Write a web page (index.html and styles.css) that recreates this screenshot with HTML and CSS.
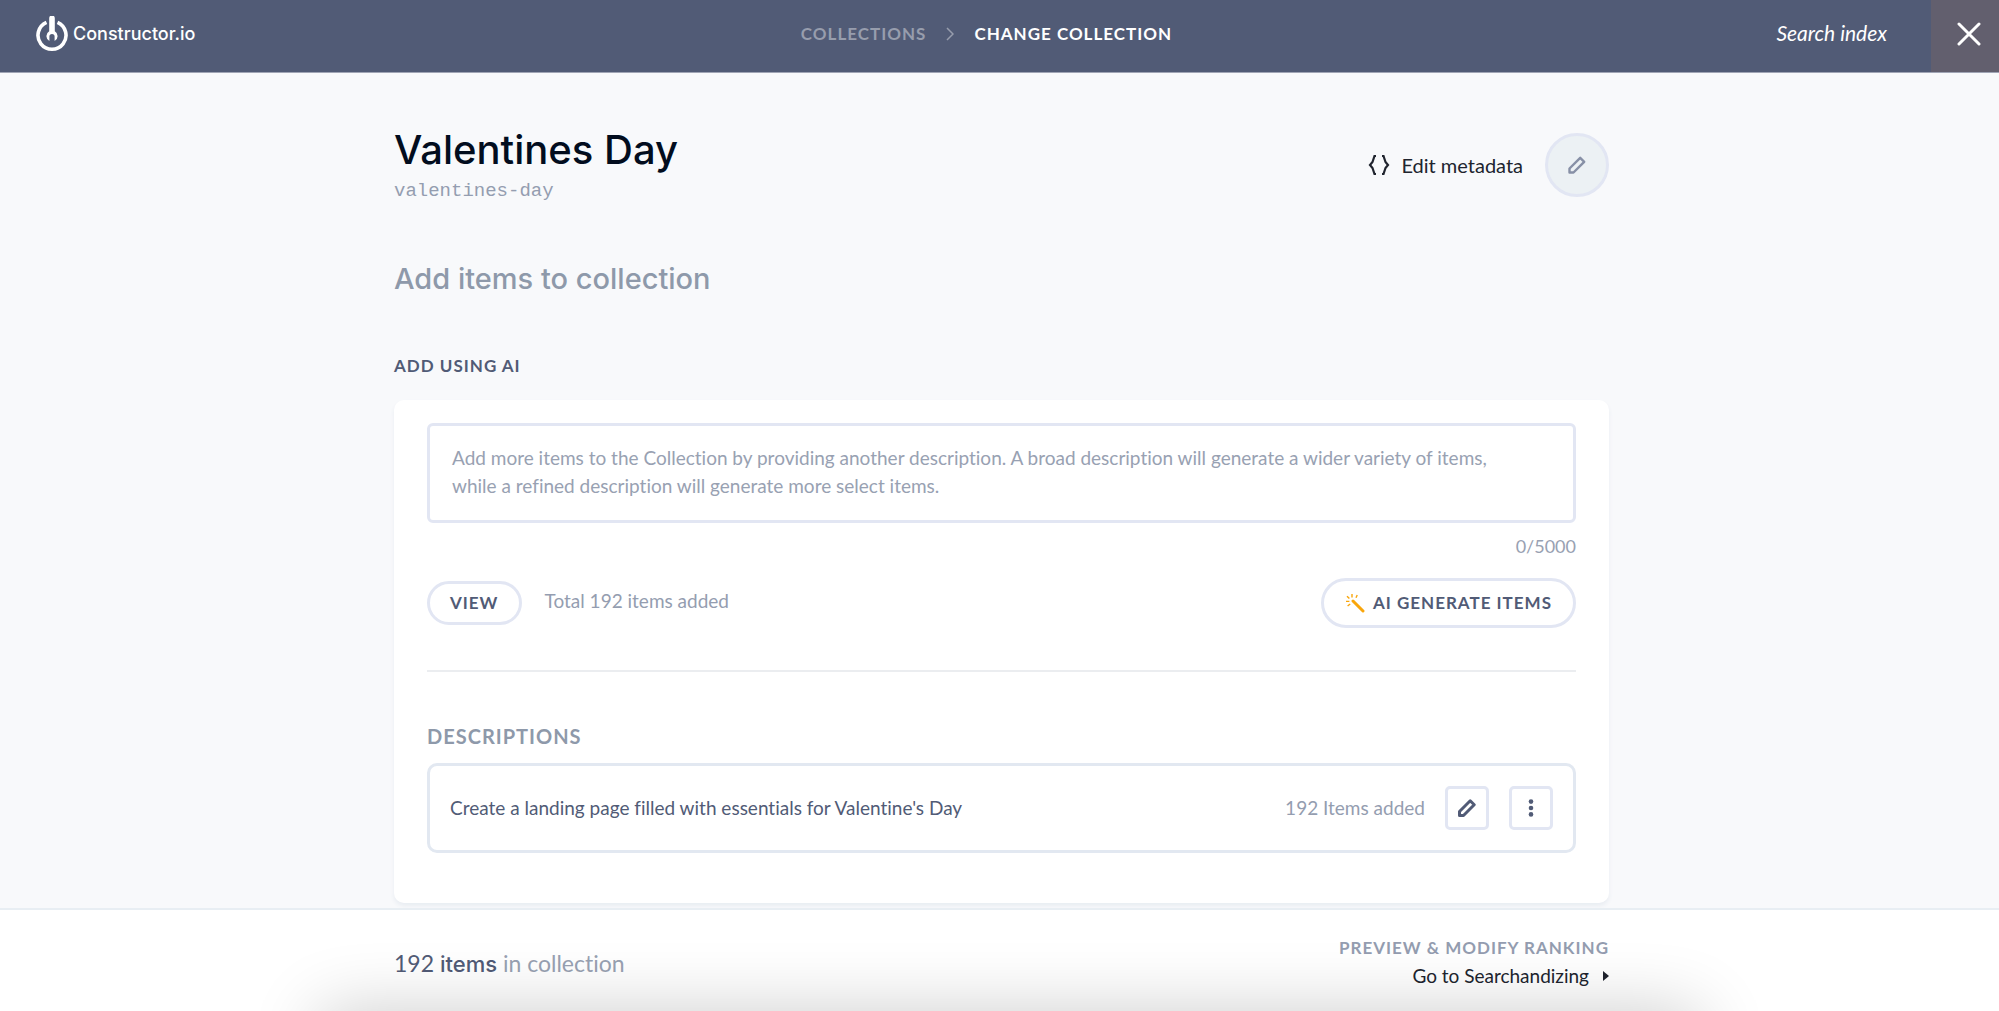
FILE: index.html
```html
<!DOCTYPE html>
<html lang="en">
<head>
<meta charset="utf-8">
<meta name="viewport" content="width=device-width, initial-scale=1">
<title>Change collection – Constructor.io</title>
<link rel="stylesheet" href="styles.css">
</head>
<body>
<header class="topbar">
  <a class="logo" href="#">
    <svg class="logo-mark" viewBox="0 0 32 36" aria-hidden="true">
      <path d="M10.500 6.400A14 14 0 1 0 21.500 6.400" fill="none" stroke="#fff" stroke-width="3.600"/>
      <path d="M13.200 2.200a2.800 2.800 0 0 1 5.600 0V15.200A5.600 5.600 0 0 1 18.600 25V20.600a2.600 2.600 0 0 0-5.200 0V25A5.600 5.600 0 0 1 13.200 15.200z" fill="#fff"/>
    </svg>
    <span>Constructor.io</span>
  </a>
  <nav class="crumbs" aria-label="Breadcrumb">
    <a class="crumb" href="#">Collections</a>
    <svg class="crumb-sep" viewBox="0 0 8 14" aria-hidden="true"><path d="M1 1l6 6-6 6" fill="none" stroke="currentColor" stroke-width="1.500"/></svg>
    <span class="crumb crumb-current" aria-current="page">Change collection</span>
  </nav>
  <div class="topbar-end">
    <a class="search-link" href="#">Search index</a>
    <button class="close" type="button" aria-label="Close">
      <svg viewBox="0 0 24 24" aria-hidden="true"><path d="M2 2l20 20M22 2L2 22" fill="none" stroke="#fff" stroke-width="3" stroke-linecap="round"/></svg>
    </button>
  </div>
</header>

<main class="wrap content">
  <div class="page-head">
    <div>
      <h1 class="title">Valentines Day</h1>
      <p class="slug">valentines-day</p>
    </div>
    <div class="head-actions">
      <button class="metadata" type="button">
        <svg viewBox="0 0 22 20" aria-hidden="true"><path d="M8 1H6.500L4.500 7 2 10l2.500 3 2 6H8M14 1h1.500l2 6 2.500 3-2.500 3-2 6H14" fill="none" stroke="currentColor" stroke-width="2.200"/></svg>
        Edit metadata
      </button>
      <button class="round-edit" type="button" aria-label="Edit collection">
        <svg viewBox="0 0 18 18" aria-hidden="true"><path d="M1.500 16.500v-4L12.200 1.800l4 4L5.500 16.500z" fill="none" stroke="currentColor" stroke-width="2.400" stroke-linejoin="round"/></svg>
      </button>
    </div>
  </div>

  <h2 class="subtitle">Add items to collection</h2>
  <h3 class="section-label"><label for="description">Add using AI</label></h3>

  <section class="card">
    <textarea class="description" id="description" maxlength="5000" placeholder="Add more items to the Collection by providing another description. A broad description will generate a wider variety of items, while a refined description will generate more select items."></textarea>
    <p class="counter">0/5000</p>
    <div class="card-actions">
      <button class="pill pill-small" type="button">View</button>
      <span class="total">Total 192 items added</span>
      <button class="pill pill-large" type="button">
        <svg viewBox="0 0 20 20" aria-hidden="true"><path d="M8 8l10 10" stroke="#f9a60b" stroke-width="3" stroke-linecap="round"/><path d="M7 1v3.400M12.200 2L11 4.800M2 3.200l2.400 2.400M1 8.400h3.400M2.600 13l2.600-2" fill="none" stroke="#f9a60b" stroke-width="1.400"/></svg>
        AI generate items
      </button>
    </div>
    <hr class="divider">
    <h4 class="list-label">Descriptions</h4>
    <div class="item">
      <span class="item-text">Create a landing page filled with essentials for Valentine's Day</span>
      <span class="item-count">192 Items added</span>
      <button class="square" type="button" aria-label="Edit description">
        <svg viewBox="0 0 18 18" aria-hidden="true"><path d="M1.500 16.500v-4L12.200 1.800l4 4L5.500 16.500z" fill="none" stroke="currentColor" stroke-width="3" stroke-linejoin="round"/></svg>
      </button>
      <button class="square" type="button" aria-label="More actions">
        <svg viewBox="0 0 18 18" aria-hidden="true"><g fill="currentColor"><circle cx="9" cy="2.600" r="2.300"/><circle cx="9" cy="9" r="2.300"/><circle cx="9" cy="15.400" r="2.300"/></g></svg>
      </button>
    </div>
  </section>
</main>

<footer class="footer">
  <div class="wrap footer-row">
    <p class="summary">192 <strong>items</strong> <span>in collection</span></p>
    <div class="ranking">
      <span class="ranking-label">Preview &amp; modify ranking</span>
      <a class="ranking-link" href="#">Go to Searchandizing
        <svg viewBox="0 0 6 10" aria-hidden="true"><path d="M0 0l6 5-6 5z" fill="currentColor"/></svg>
      </a>
    </div>
  </div>
</footer>
</body>
</html>
```
FILE: styles.css
```css
* { box-sizing: border-box; }

body {
  margin: 0;
  min-height: 100vh;
  display: flex;
  flex-direction: column;
  background: #f8f9fb;
  color: #515b76;
  font: 400 19px/28px Lato, "Liberation Sans", sans-serif;
  font-variant-ligatures: none;
}

h1, h2, h3, h4, p { margin: 0; }
a { color: inherit; text-decoration: none; }
button { font: inherit; color: inherit; cursor: pointer; padding: 0; }
svg { flex: none; }

.topbar {
  display: grid;
  grid-template-columns: 1fr auto 1fr;
  height: 73px;
  background: #515b76;
  border-bottom: 1px solid #a0a5b5;
  color: #fff;
}

.logo {
  display: flex;
  align-items: center;
  gap: 5px;
  padding: 0 0 4px 36px;
  font: 500 18px/24px Inter, sans-serif;
}
.logo-mark { width: 32px; height: 36px; }

.crumbs {
  display: flex;
  align-items: center;
  gap: 20px;
  padding: 0 26px 4px 0;
  text-transform: uppercase;
  font-size: 17px;
  font-weight: 700;
  letter-spacing: 1px;
}
.crumb, .crumb-sep { color: #979dad; }
.crumb-current { color: #fff; }
.crumb-sep { width: 8px; height: 14px; }

.topbar-end {
  display: flex;
  justify-content: flex-end;
  align-items: center;
  gap: 44px;
}
.search-link { font-size: 21px; font-style: italic; padding-bottom: 6px; }
.close {
  width: 68px;
  height: 100%;
  border: 0;
  padding: 0 0 5px 8px;
  background: #625f6e;
}
.close svg { width: 24px; height: 24px; display: block; margin: auto; }

.wrap {
  width: 100%;
  max-width: 1219px;
  margin: 0 auto;
  padding-left: 4px;
}
.content { padding-top: 51px; padding-bottom: 5px; }

.page-head { display: flex; justify-content: space-between; }
.title {
  color: #020d1e;
  font: 500 40px/52px Inter, sans-serif;
}
.slug {
  color: #949db0;
  font: 400 19px/30px "Liberation Mono", monospace;
}
.head-actions {
  display: flex;
  align-items: center;
  gap: 22px;
}
.metadata {
  display: flex;
  align-items: center;
  gap: 11px;
  border: 0;
  background: none;
  color: #20242e;
  font-size: 20px;
}
.metadata svg { width: 22px; height: 20px; }
.round-edit {
  display: grid;
  place-items: center;
  width: 64px;
  height: 64px;
  border: 3px solid #e2e6f3;
  border-radius: 50%;
  background: #ecf1f4;
  color: #8790a6;
}
.round-edit svg, .square svg { width: 18px; height: 18px; }

.subtitle {
  margin-top: 55px;
  color: #8e99aa;
  font: 500 29px/36px Inter, sans-serif;
}
.section-label {
  margin: 55px 0 20px;
  font-size: 17px;
  line-height: 28px;
  letter-spacing: 1px;
  text-transform: uppercase;
}

.card {
  padding: 23px 33px 50px;
  border-radius: 10px;
  background: #fff;
  box-shadow: 0 3px 4px #e9edf2;
}
.description {
  display: block;
  width: 100%;
  height: 100px;
  padding: 18px 60px 18px 22px;
  border: 3px solid #e2e6f3;
  border-radius: 6px;
  background: #fff;
  color: #515b76;
  font: inherit;
  resize: none;
  overflow: hidden;
}
.description::placeholder { color: #98a1b2; opacity: 1; }
.counter {
  margin-top: 9px;
  text-align: right;
  color: #98a1b2;
  font-size: 18px;
}
.card-actions {
  display: flex;
  align-items: center;
  gap: 23px;
  margin-top: 18px;
}
.total { color: #949db0; padding-bottom: 4px; }
.pill {
  display: flex;
  align-items: center;
  justify-content: center;
  gap: 8px;
  border: 3px solid #e2e6f3;
  border-radius: 25px;
  background: #fff;
  font-size: 17px;
  font-weight: 700;
  letter-spacing: 1px;
  text-transform: uppercase;
}
.pill-small { height: 44px; padding: 0 20px; }
.pill-large { height: 50px; padding: 0 21px; margin-left: auto; }
.pill svg { width: 20px; height: 20px; }
.divider {
  margin: 42px 0 50px;
  border: 0;
  border-top: 2px solid #ebedf0;
}
.list-label {
  margin-bottom: 13px;
  color: #8e99aa;
  font-size: 20px;
  line-height: 28px;
  letter-spacing: 1px;
  text-transform: uppercase;
}
.item {
  display: flex;
  align-items: center;
  gap: 20px;
  height: 90px;
  padding: 0 20px;
  border: 3px solid #e2e8f1;
  border-radius: 10px;
}
.item-text { flex: 1; }
.item-count { color: #949db0; }
.square {
  display: grid;
  place-items: center;
  width: 44px;
  height: 44px;
  border: 3px solid #e2e6f3;
  border-radius: 5px;
  background: #fff;
}

.footer {
  position: sticky;
  bottom: 0;
  overflow: hidden;
  margin-top: auto;
  border-top: 2px solid #e8eef3;
  background: #fff;
}
/* Soft shade rising from the lower window edge */
.footer::after {
  content: "";
  position: absolute;
  left: 16%;
  right: 15%;
  top: 100%;
  height: 80px;
  box-shadow: 0 0 70px rgba(0, 0, 0, 0.2);
}
.footer-row {
  display: flex;
  justify-content: space-between;
  align-items: center;
  padding-top: 24px;
  padding-bottom: 21px;
}
.summary { padding-top: 2px; font-size: 23px; }
.summary strong { font: 500 22px/28px Inter, sans-serif; }
.summary span { color: #98a1b2; }
.ranking { text-align: right; }
.ranking-label {
  display: block;
  color: #949db0;
  font-size: 17px;
  font-weight: 700;
  letter-spacing: 1px;
  text-transform: uppercase;
}
.ranking-link {
  display: flex;
  align-items: center;
  justify-content: flex-end;
  gap: 14px;
  color: #20242e;
}
.ranking-link svg { width: 6px; height: 10px; }
```
